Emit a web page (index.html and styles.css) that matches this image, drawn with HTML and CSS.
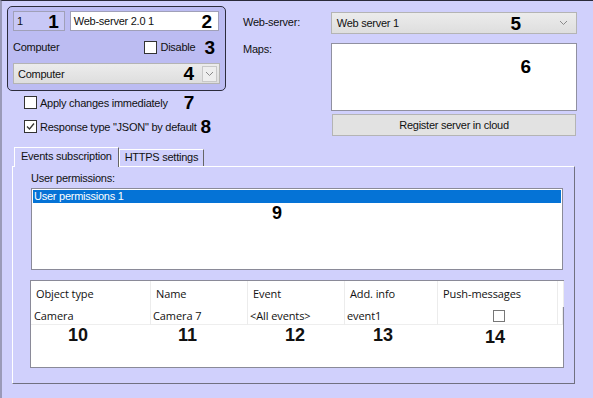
FILE: index.html
```html
<!DOCTYPE html>
<html lang="en">
<head>
    <meta charset="UTF-8">
    <title>Web-server settings</title>
    <link rel="stylesheet" href="styles.css">
</head>
<body>
    <div class="window">
        <!-- Top part: object panel and server settings -->
        <div class="top">
            <div class="left-col">
                <div class="obj-panel">
                    <div class="row">
                        <div class="field field-id"><span>1</span><b class="mark">1</b></div>
                        <div class="field field-name"><span>Web-server 2.0 1</span><b class="mark">2</b></div>
                    </div>
                    <div class="row row-mid">
                        <span>Computer</span>
                        <label class="check"><span class="box"></span>Disable<b class="mark">3</b></label>
                    </div>
                    <div class="combo combo-pc">
                        <span>Computer</span>
                        <b class="mark">4</b>
                        <span class="drop"><svg width="9" height="6" viewBox="0 0 9 6"><path d="M1 1 L4.5 4.5 L8 1" fill="none" stroke="#8a8a8a"/></svg></span>
                    </div>
                </div>
                <label class="check opt opt-apply"><span class="box"></span>Apply changes immediately<b class="mark">7</b></label>
                <label class="check opt opt-json"><span class="box checked"><svg width="11" height="11" viewBox="0 0 11 11"><path d="M2 5.5 L4.5 8 L9 2.5" fill="none" stroke="#333" stroke-width="1.3"/></svg></span>Response type "JSON" by default<b class="mark">8</b></label>
            </div>

            <div class="right-col">
                <div class="form-line">
                    <span class="lbl">Web-server:</span>
                    <div class="combo combo-server">
                        <span>Web server 1</span>
                        <b class="mark">5</b>
                        <svg class="arrow" width="9" height="6" viewBox="0 0 9 6"><path d="M1 1 L4.5 4.5 L8 1" fill="none" stroke="#8a8a8a"/></svg>
                    </div>
                </div>
                <div class="form-line maps-line">
                    <span class="lbl">Maps:</span>
                    <div class="maps-box"><b class="mark">6</b></div>
                </div>
                <button class="btn">Register server in cloud</button>
            </div>
        </div>

        <!-- Tabs -->
        <div class="tabs">
            <div class="tab active">Events subscription</div>
            <div class="tab">HTTPS settings</div>
        </div>
        <div class="tab-panel">
            <div class="caption">User permissions:</div>
            <div class="list">
                <div class="list-item selected">User permissions 1</div>
                <b class="mark mark-9">9</b>
            </div>

            <div class="grid">
                <div class="grid-row grid-head">
                    <div>Object type</div>
                    <div>Name</div>
                    <div>Event</div>
                    <div>Add. info</div>
                    <div>Push-messages</div>
                    <div></div>
                </div>
                <div class="grid-row grid-data">
                    <div>Camera</div>
                    <div>Camera 7</div>
                    <div>&lt;All events&gt;</div>
                    <div>event1</div>
                    <div class="center"><span class="box small"></span></div>
                    <div></div>
                </div>
                <div class="grid-marks">
                    <b>10</b>
                    <b>11</b>
                    <b>12</b>
                    <b>13</b>
                    <b class="low">14</b>
                </div>
            </div>
        </div>
    </div>
</body>
</html>
```

FILE: styles.css
```css
* {
    margin: 0;
    padding: 0;
    box-sizing: border-box;
}

body {
    background-color: #d0d0fc;
    font-family: 'Liberation Sans', Arial, sans-serif;
    font-size: 11px;
    letter-spacing: -0.25px;
    color: #111;
}

.window {
    width: 593px;
    height: 398px;
    border-top: 1px solid #2a2a3a;
    border-left: 2px solid #9a9ab8;
    overflow: hidden;
}

.mark {
    font-family: 'Liberation Sans', Arial, sans-serif;
    font-weight: bold;
    font-size: 19px;
    letter-spacing: 0;
    color: #000;
    line-height: 1;
}

/* top area */
.top {
    display: flex;
    padding: 5px 0 0 5px;
}

.left-col {
    width: 236px;
}

.obj-panel {
    width: 219px;
    height: 85px;
    background-color: #bcbcf2;
    border: 1px solid #2c2c3c;
    border-radius: 5px;
    padding: 4px 6px 0 5px;
}

.row {
    display: flex;
    gap: 5px;
}

.field {
    height: 20px;
    border: 1px solid #a0a0b8;
    display: flex;
    align-items: center;
    justify-content: space-between;
    padding: 0 5px 0 3px;
}

.field-id {
    width: 52px;
    background-color: #c8c8f6;
}

.field-name {
    width: 150px;
    background-color: #fff;
    padding-right: 6px;
}

.row-mid {
    justify-content: space-between;
    align-items: center;
    height: 32px;
    padding-right: 4px;
}

.check {
    display: flex;
    align-items: center;
}

.box {
    display: inline-block;
    width: 13px;
    height: 13px;
    background-color: #fff;
    border: 1px solid #333;
    margin-right: 3px;
}

.box svg {
    display: block;
}

.row-mid .mark {
    margin-left: 9px;
}

.combo {
    display: flex;
    align-items: center;
    border: 1px solid #b4b4b4;
    background: linear-gradient(#ececec, #dedede);
}

.combo-pc {
    width: 207px;
    height: 21px;
    padding: 0 2px 0 4px;
}

.combo-pc > span:first-child {
    flex: 1;
}

.combo-pc .mark {
    margin-right: 8px;
}

.drop {
    width: 15px;
    height: 16px;
    border: 1px solid #c8c8c8;
    background-color: #eeeeee;
    display: flex;
    align-items: center;
    justify-content: center;
}

.opt {
    margin: 2px 0 0 17px;
    height: 19px;
}

.opt-json {
    margin-top: 5px;
}

.opt-apply .mark {
    margin-left: 16px;
}

.opt-json .mark {
    margin-left: 4px;
}

/* right area */
.right-col {
    width: 334px;
    padding-top: 6px;
}

.form-line {
    display: flex;
}

.lbl {
    width: 88px;
    padding-top: 4px;
}

.combo-server {
    width: 247px;
    height: 22px;
    padding: 0 8px 0 5px;
}

.combo-server > span:first-child {
    flex: 1;
}

.combo-server .mark {
    margin-right: 38px;
}

.maps-line {
    margin-top: 9px;
}

.maps-line .lbl {
    padding-top: 0;
}

.maps-box {
    width: 247px;
    height: 68px;
    background-color: #fff;
    border: 1px solid #9090a0;
    text-align: right;
    padding: 13px 45px 0 0;
}

.btn {
    display: block;
    margin: 3px 0 0 89px;
    width: 244px;
    height: 22px;
    border: 1px solid #b4b4b4;
    background-color: #e2e2e2;
    font-family: 'Liberation Sans', Arial, sans-serif;
    font-size: 11px;
    letter-spacing: -0.25px;
    color: #111;
}

/* tabs */
.tabs {
    display: flex;
    align-items: flex-end;
    margin: 10px 0 0 12px;
    height: 20px;
}

.tab {
    height: 17px;
    padding: 0 5px;
    border: 1px solid #fff;
    border-right-color: #666;
    border-bottom: none;
    line-height: 15px;
}

.tab.active {
    height: 20px;
    padding: 0 6px;
    line-height: 17px;
    position: relative;
    top: 1px;
    background-color: #d0d0fc;
}

.tab-panel {
    margin-left: 10px;
    width: 563px;
    height: 218px;
    border: 1px solid #fff;
    border-right-color: #707080;
    border-bottom-color: #707080;
    padding: 5px 10px 0 17px;
}

.caption {
    height: 16px;
    padding-left: 1px;
}

.list {
    position: relative;
    margin-left: 1px;
    width: 532px;
    height: 82px;
    background-color: #fff;
    border: 1px solid #8a8a98;
    padding: 1px;
}

.list-item {
    height: 13px;
    line-height: 13px;
    padding-left: 1px;
}

.list-item.selected {
    background-color: #0573d6;
    color: #fff;
}

.mark-9 {
    position: absolute;
    left: 240px;
    top: 15px;
    font-size: 18px;
}

/* grid */
.grid {
    margin-top: 10px;
    width: 534px;
    height: 88px;
    background-color: #fff;
    border: 1px solid #8a8a98;
    font-family: 'Open Sans', 'Liberation Sans', sans-serif;
    font-size: 11px;
    letter-spacing: -0.1px;
}

.grid-row {
    display: grid;
    grid-template-columns: 120px 97px 97px 93px 120px 1fr;
}

.grid-row > div {
    border-right: 1px solid #ececec;
}

.grid-head {
    height: 26px;
}

.grid-head > div {
    height: 26px;
    line-height: 26px;
    padding-left: 5px;
}

.grid-data {
    height: 18px;
    border-bottom: 1px solid #eeeeee;
}

.grid-data > div {
    line-height: 18px;
    padding-left: 2px;
}

.grid-data > div:first-child {
    padding-left: 3px;
}

.grid-data > div.center {
    display: flex;
    align-items: center;
    justify-content: center;
}

.box.small {
    width: 12px;
    height: 12px;
    border-color: #777;
    margin: 0;
}

.grid-marks {
    display: grid;
    grid-template-columns: 110px 107px 88px 112px 40px;
    padding-left: 37px;
    font-family: 'Liberation Sans', Arial, sans-serif;
    font-size: 18px;
    letter-spacing: 0;
    height: 19px;
    align-items: end;
}

.grid-marks .low {
    position: relative;
    top: 2px;
}
```
